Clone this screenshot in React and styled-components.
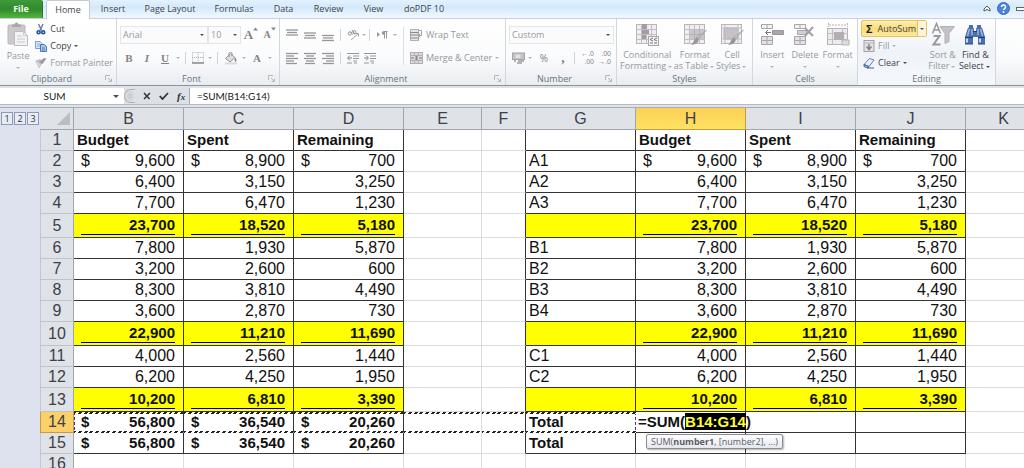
import React from "react";
import styled, { createGlobalStyle, css } from "styled-components";

const tabs = [
  { name: "Insert", width: 46 },
  { name: "Page Layout", width: 68 },
  { name: "Formulas", width: 60 },
  { name: "Data", width: 39 },
  { name: "Review", width: 51 },
  { name: "View", width: 39 },
  { name: "doPDF 10", width: 62 },
];

const columns = [
  { name: "B", width: 110 },
  { name: "C", width: 110 },
  { name: "D", width: 110 },
  { name: "E", width: 78 },
  { name: "F", width: 44 },
  { name: "G", width: 110 },
  { name: "H", width: 110 },
  { name: "I", width: 110 },
  { name: "J", width: 110 },
  { name: "K" },
];

const rows = [
  { label: "", values: ["Budget", "Spent", "Remaining"], type: "head" },
  { label: "A1", values: ["9,600", "8,900", "700"], money: true },
  { label: "A2", values: ["6,400", "3,150", "3,250"] },
  { label: "A3", values: ["7,700", "6,470", "1,230"] },
  { label: "", values: ["23,700", "18,520", "5,180"], type: "subtotal" },
  { label: "B1", values: ["7,800", "1,930", "5,870"] },
  { label: "B2", values: ["3,200", "2,600", "600"] },
  { label: "B3", values: ["8,300", "3,810", "4,490"] },
  { label: "B4", values: ["3,600", "2,870", "730"] },
  { label: "", values: ["22,900", "11,210", "11,690"], type: "subtotal" },
  { label: "C1", values: ["4,000", "2,560", "1,440"] },
  { label: "C2", values: ["6,200", "4,250", "1,950"] },
  { label: "", values: ["10,200", "6,810", "3,390"], type: "subtotal" },
  { label: "Total", values: ["56,800", "36,540", "20,260"], type: "total", money: true },
  { label: "Total", values: ["56,800", "36,540", "20,260"], type: "total", money: true },
];

const ACTIVE_ROW = 14;

// ---------- icons ----------

const PasteIcon = () => (
  <svg width="24" height="25" viewBox="0 0 24 25">
    <rect x="2" y="3" width="17" height="19" rx="1" fill="#cbc7cb" stroke="#bbb7bb" />
    <path d="M6 5V2.500h2.500a2 2 0 0 1 4 0H15V5z" fill="#aaa6aa" />
    <path d="M8.500 9.500h9l4 4v10h-13z" fill="#f3f2f4" stroke="#bdbac0" />
    <path d="M17.500 9.500v4h4M11 14h5M11 17h8M11 20h8" fill="none" stroke="#ccc9cf" />
  </svg>
);

const CutIcon = () => (
  <svg width="12" height="12" viewBox="0 0 12 12">
    <path d="M3.500 1l3 6.500M8 1L5 7.500" fill="none" stroke="#5a7db5" strokeWidth="1.400" />
    <circle cx="3.600" cy="9.200" r="1.500" fill="none" stroke="#1f4f9f" strokeWidth="1.600" />
    <circle cx="8.200" cy="9.200" r="1.500" fill="none" stroke="#1f4f9f" strokeWidth="1.600" />
  </svg>
);

const CopyIcon = () => (
  <svg width="12" height="12" viewBox="0 0 12 12">
    <path d="M.5 1.500h4.500l2 2v5H.5z" fill="#dce8f8" stroke="#7d9cc9" />
    <path d="M2 4h3M2 6h3" stroke="#8aa8d4" />
    <path d="M5.500 4.500H9l2.500 2v5h-6z" fill="#a9c4ec" stroke="#4f76b8" />
    <path d="M7 8h3M7 10h3" stroke="#5f84c0" />
  </svg>
);

const PainterIcon = () => (
  <svg width="12" height="12" viewBox="0 0 12 12">
    <path d="M0 4l5-2 3 3-4 6.500C3 8.500 1.500 6 0 4z" fill="#c0bec2" />
    <path d="M4 5l5-4 2.500.5L7.500 7z" fill="#9c9a9f" />
    <path d="M2 5l3 4" stroke="#eee" />
  </svg>
);

const FontSizeIcon = ({ up }) => (
  <svg width="5" height="4" viewBox="0 0 5 4">
    <path d={up ? "M0 3.500L2.500.5 5 3.500z" : "M0 .5h5L2.500 3.500z"} fill="#888" />
  </svg>
);

const BordersIcon = () => (
  <svg width="12" height="12" viewBox="0 0 12 12">
    <path d="M.5.5h11v10H.5zM6 0v11M0 5.500h12" fill="none" stroke="#b3b0b5" strokeDasharray="1 1" />
    <path d="M0 11h12" stroke="#8d8a90" strokeWidth="1.500" />
  </svg>
);

const BucketIcon = () => (
  <svg width="14" height="13" viewBox="0 0 14 13">
    <path d="M1.500 6.500l5-5 4.500 4-5 4.500z" fill="#dddbe0" stroke="#98959b" />
    <path d="M5 5V1.500a1.500 1.500 0 0 1 3 0V4" fill="none" stroke="#98959b" />
    <path d="M11 5.500c1.500 1.500 2 3 1 4s-2-1-1-4z" fill="#858288" />
    <path d="M1 11.500h12" stroke="#dcdade" strokeWidth="2" />
  </svg>
);

const lineSets = {
  top: ["M0 1h12", "M1 3.500h10", "M0 6h12"],
  middle: ["M0 4h12", "M1 6.500h10", "M0 9h12"],
  bottom: ["M0 6.500h12", "M1 9h10", "M0 11.500h12"],
  left: ["M0 1.500h12", "M0 4h8", "M0 6.500h12", "M0 9h8", "M0 11.500h11"],
  center: ["M0 1.500h12", "M2 4h8", "M0 6.500h12", "M2 9h8", "M1 11.500h10"],
  right: ["M0 1.500h12", "M4 4h8", "M0 6.500h12", "M4 9h8", "M1 11.500h11"],
};

const LinesIcon = ({ kind }) => (
  <svg width="12" height="13" viewBox="0 0 12 13">
    {lineSets[kind].map((d) => (
      <path key={d} d={d} stroke="#98959a" strokeWidth="1.300" />
    ))}
  </svg>
);

const OrientationIcon = () => (
  <svg width="13" height="12" viewBox="0 0 13 12">
    <circle cx="2.800" cy="4.500" r="1.600" fill="none" stroke="#918e94" />
    <path d="M3.500 2.500l2 3M5 1l3 4.500" fill="none" stroke="#918e94" />
    <circle cx="7.500" cy="3.200" r="1.500" fill="none" stroke="#918e94" />
    <path d="M4 11l7.500-6.500M8.500 4.500h3v3" fill="none" stroke="#a8a5ab" />
  </svg>
);

const DirectionIcon = () => (
  <svg width="11" height="10" viewBox="0 0 11 10">
    <path d="M0 2l3 2.500L0 7z" fill="#98959a" />
    <path d="M10.500 1.500H6.500M7.500 1.500v7M9.500 1.500v7" fill="none" stroke="#98959a" />
    <circle cx="6.500" cy="3" r="1.800" fill="#98959a" />
  </svg>
);

const IndentIcon = ({ out }) => (
  <svg width="13" height="12" viewBox="0 0 13 12">
    <path d="M0 1.500h12M6 4h6M6 6.500h6M6 9h4M0 11h5M7 11h3" stroke="#98959a" strokeWidth="1.200" />
    <path d={out ? "M5 6H1M3 3.500L.5 6 3 8.500" : "M0 6h4M2 3.500L4.500 6 2 8.500"} fill="none" stroke="#848187" />
  </svg>
);

const WrapIcon = () => (
  <svg width="13" height="12" viewBox="0 0 13 12">
    <rect x=".5" y=".5" width="8" height="11" fill="#e6e4e8" stroke="#b3b0b5" />
    <path d="M0 3.500h9M0 6h9M0 9h9" stroke="#8b888e" strokeWidth="1.200" />
    <path d="M9 1.500h2.500v5H9M10.500 4.500l-2 2 2 2" fill="none" stroke="#a5a2a8" />
  </svg>
);

const MergeIcon = () => (
  <svg width="13" height="12" viewBox="0 0 13 12">
    <rect x=".5" y=".5" width="12" height="11" fill="#dcdade" stroke="#b1aeb4" />
    <path d="M0 3.500h13M0 8.500h13M4.500 0v3.500M8.500 0v3.500M4.500 8.500V12M8.500 8.500V12" stroke="#b1aeb4" />
    <path d="M1 6h3M12 6H9" stroke="#7f7c82" />
    <path d="M6.500 4v4" stroke="#88858b" strokeWidth="2" />
  </svg>
);

const MoneyIcon = () => (
  <svg width="13" height="13" viewBox="0 0 13 13">
    <rect x=".5" y="1" width="12" height="6.500" fill="#c3c0c6" stroke="#a6a3aa" />
    <rect x="3.500" y="2.500" width="5" height="3.500" fill="#e3e1e5" />
    <path d="M6 9h6M5 11h5M2 9h2" stroke="#9d9aa0" strokeWidth="1.500" />
  </svg>
);

const GridIcon = ({ kind }) => (
  <svg width="24" height="24" viewBox="0 0 24 24">
    <rect x="1.500" y="2.500" width="20" height="19" fill="#f0eef1" stroke="#b9b5ba" />
    {kind === "cell" ? (
      <path d="M4 6h14v11H4z" fill="#c6c3c8" stroke="#b1adb3" />
    ) : (
      <path d="M6.500 2v20M11.500 2v20M16.500 2v20M1 7.500h21M1 12.500h21M1 17.500h21" stroke="#c2bec4" />
    )}
    {kind === "conditional" && (
      <>
        <path d="M7 2h5v5H7zM7 8h7v4H7zM7 13h4v4H7z" fill="#a19da3" />
        <rect x="13.500" y="14.500" width="10" height="9" fill="#f4f3f5" stroke="#a9a5ab" />
        <path d="M18 16l-3 1.500L18 19M15 21h3M22 16l-3 1.500L22 19M19 21h3" fill="none" stroke="#77747a" />
      </>
    )}
    {kind === "table" && <path d="M7 8h14v9H7z" fill="#aaa6ac" fillOpacity=".55" />}
    {kind === "cell" && <path d="M1 6h20M1 17h20M5 2v19M18 2v19" stroke="#c2bec4" />}
    {kind !== "conditional" && (
      <>
        <path d="M23.500 8l-8 9-2-1.500z" fill="#c4c1c6" stroke="#9c989e" strokeWidth=".6" />
        <path d="M15.500 17c1 3-2.500 5.500-7.500 6 3-2 2-5 5.500-7.500z" fill="#99959b" />
      </>
    )}
  </svg>
);

const CellsIcon = ({ kind }) => (
  <svg width="24" height="24" viewBox="0 0 24 24">
    {kind === "format" ? (
      <>
        <path d="M2.500 1v4M21.500 1v4M3 3h18" fill="none" stroke="#b4b0b6" strokeDasharray="2 1" />
        <rect x="1.500" y="6.500" width="20" height="16" fill="#ececee" stroke="#b6b2b8" />
        <path d="M6.500 6v17M16.500 6v17M1 11.500h21M1 17.500h21" stroke="#c2bec4" />
        <path d="M8 10h10v8H8z" fill="#b2aeb4" />
        <path d="M16 18h7v5h-7z" fill="#dddbdf" stroke="#b6b2b8" />
      </>
    ) : (
      <>
        <path d="M1.500 2.500h11v4h-11zM7 2.500v4" fill="#f3f2f4" stroke="#aaa6ac" />
        <path d="M1.500 14.500h11v8h-11zM7 14.500v8M1.500 18.500h11" fill="#e3e1e5" stroke="#aaa6ac" />
        {kind === "insert" ? (
          <>
            <path d="M12.500 8.500h11v4h-11z" fill="#aaa6ac" stroke="#99959b" />
            <path d="M11 10.500H6M8 8l-2.500 2.500L8 13" fill="none" stroke="#77747a" />
          </>
        ) : (
          <>
            <path d="M4.500 8.500h9v4h-9z" fill="#d1ced4" stroke="#aaa6ac" />
            <path d="M12 6l8 8M20 5l-8 9" stroke="#a39fa5" strokeWidth="2" />
          </>
        )}
      </>
    )}
  </svg>
);

const FillIcon = () => (
  <svg width="12" height="12" viewBox="0 0 12 12">
    <rect x="1" y=".5" width="10" height="11" fill="#e4e2e6" stroke="#a4a1a7" />
    <path d="M1 3h10" stroke="#b9b6bc" />
    <path d="M6 4v5M3.500 6.500L6 9.500l2.500-3" fill="none" stroke="#848187" strokeWidth="1.500" />
  </svg>
);

const EraserIcon = () => (
  <svg width="12" height="12" viewBox="0 0 12 12">
    <path d="M1 7.500L6.500 1.500 11 3 6 9.500z" fill="#eaf0fb" stroke="#6481b4" />
    <path d="M1 7.500l5 2-1 1.500-4-1.500z" fill="#aebfe0" stroke="#3e5f9c" />
    <path d="M4 11h7" stroke="#3e5f9c" />
  </svg>
);

const FilterIcon = () => (
  <svg width="24" height="24" viewBox="0 0 24 24">
    <path d="M9 4.500h14.500l-5.500 7v8l-4 2v-10z" fill="#c4c1c7" stroke="#b4b1b7" />
    <path d="M1.500 11.500l4-10 4 10M3 8h5" fill="none" stroke="#9a979d" strokeWidth="1.500" />
    <path d="M2.500 14h6l-6 8.500h7" fill="none" stroke="#9a979d" strokeWidth="2" />
  </svg>
);

const BinocularsIcon = () => (
  <svg width="24" height="24" viewBox="0 0 24 24">
    <path d="M4.500 7l1.500-2V3h4v2l1 2v2h2V7l1-2V3h4v2l1.500 2 2.500 8v7h-7v-7h-5v7h-8v-7z" fill="#4a6fae" />
    <path d="M6.500 7l-2 7M17.500 7l2 7M9 7v6M15 7v6" stroke="#9db7e2" strokeWidth="1.500" />
    <path d="M2 15.500h8M15 15.500h7M10 9.500h4" stroke="#20396b" />
    <path d="M4 16.500v4M17 16.500v4" stroke="#c4d6f1" strokeWidth="2" />
    <path d="M2 22h8M15 22h7" stroke="#2b4880" />
  </svg>
);

const LauncherIcon = () => (
  <svg width="7" height="7" viewBox="0 0 7 7">
    <path d="M.5 5V.5H5M3 3l3 3M6.500 3.500v3h-3" fill="none" stroke="#b4b8be" />
  </svg>
);

const CollapseIcon = () => (
  <svg width="8" height="7" viewBox="0 0 8 7">
    <path d="M1 4l3-3 3 3v2L4 4.500 1 6z" fill="#fff" stroke="#555" />
  </svg>
);

const HelpIcon = () => (
  <svg width="13" height="13" viewBox="0 0 13 13">
    <circle cx="6.500" cy="6.500" r="6" fill="#4a84d6" stroke="#3a6cb8" />
    <path d="M4.500 5a2 2 0 1 1 2.800 1.800c-.6.300-.8.600-.8 1.200" fill="none" stroke="#fff" strokeWidth="1.500" />
    <circle cx="6.500" cy="10" r=".9" fill="#fff" />
  </svg>
);

const CrossIcon = () => (
  <svg width="8" height="8" viewBox="0 0 8 8">
    <path d="M1 1l5.500 6M7 1L1 7" stroke="#333" strokeWidth="1.500" />
  </svg>
);

const CheckIcon = () => (
  <svg width="10" height="8" viewBox="0 0 10 8">
    <path d="M.8 4L3.500 7 9 1" fill="none" stroke="#333" strokeWidth="1.800" />
  </svg>
);

// ---------- pieces ----------

function RibbonGroup({ title, width, launcher, tint, children }) {
  return (
    <Group $width={width} $tint={tint}>
      <GroupBody>{children}</GroupBody>
      <GroupTitle>
        <span>{title}</span>
        {launcher && (
          <Launcher aria-label={`${title} settings`}>
            <LauncherIcon />
          </Launcher>
        )}
      </GroupTitle>
    </Group>
  );
}

function BigCommand({ icon, lines, width, active, arrowBelow }) {
  return (
    <BigButton $width={width} $active={active}>
      {icon}
      {lines.map((line, i) => (
        <span key={line}>
          {line}
          {!arrowBelow && i === lines.length - 1 && <Caret $gap={2} $dark={active} />}
        </span>
      ))}
      {arrowBelow && (
        <span>
          <Caret />
        </span>
      )}
    </BigButton>
  );
}

function ValueCell({ row, value, march }) {
  if (row.type === "head") {
    return (
      <Cell $bordered $bold>
        <CellText>{value}</CellText>
      </Cell>
    );
  }
  const bold = row.type === "subtotal" || row.type === "total";
  return (
    <Cell $bordered $bold={bold} $yellow={row.type === "subtotal"} $march={march}>
      <Amount $underlined={row.type === "subtotal"}>
        <span>{row.money ? "$" : ""}</span>
        <span>{value}</span>
      </Amount>
    </Cell>
  );
}

function SheetRow({ row, number }) {
  const active = number === ACTIVE_ROW;
  const yellow = row.type === "subtotal";
  return (
    <Row $tall={yellow}>
      <RowHead scope="row" $active={active}>
        {number}
      </RowHead>
      {row.values.map((v, i) => (
        <ValueCell key={i} row={row} value={v} march={active && (i === 0 ? "start" : "middle")} />
      ))}
      <Cell $march={active && "middle"} />
      <Cell $march={active && "middle"} $edge />
      <Cell $bordered $yellow={yellow} $bold={row.type === "total"} $march={active && "end"}>
        <CellText>{row.label}</CellText>
      </Cell>
      {number < ACTIVE_ROW &&
        row.values.map((v, i) => <ValueCell key={i} row={row} value={v} />)}
      {active && (
        <Cell $bordered $bold>
          <CellEditor>
            =SUM(<mark>B14:G14</mark>)
            <Hint role="tooltip">
              SUM(<b>number1</b>, [number2], ...)
            </Hint>
          </CellEditor>
        </Cell>
      )}
      {number > ACTIVE_ROW && <Cell $bordered />}
      {number >= ACTIVE_ROW && (
        <>
          <Cell $bordered />
          <Cell $bordered />
        </>
      )}
      <Cell />
    </Row>
  );
}

export default function App() {
  return (
    <Window>
      <GlobalStyle />
      <TabBar>
        <FileTab>File</FileTab>
        <HomeTab>Home</HomeTab>
        {tabs.map((tab) => (
          <Tab key={tab.name} $width={tab.width}>
            {tab.name}
          </Tab>
        ))}
        <WindowTools>
          <PlainButton aria-label="Collapse ribbon">
            <CollapseIcon />
          </PlainButton>
          <PlainButton aria-label="Help">
            <HelpIcon />
          </PlainButton>
          <Minimize aria-label="Minimize" />
        </WindowTools>
      </TabBar>

      <Ribbon>
        <RibbonGroup title="Clipboard" width={117} launcher>
          <BigCommand icon={<PasteIcon />} lines={["Paste"]} width={34} arrowBelow />
          <CommandList>
            <Command $inset $active>
              <CutIcon /> Cut
            </Command>
            <Command $inset $active>
              <CopyIcon /> Copy <Caret $dark />
            </Command>
            <Command $inset>
              <PainterIcon /> Format Painter
            </Command>
          </CommandList>
        </RibbonGroup>

        <RibbonGroup title="Font" width={163} launcher>
          <ToolRows>
            <ToolRow>
              <Picker $width={88}>
                <select aria-label="Font name" defaultValue="Arial">
                  <option>Arial</option>
                </select>
                <Caret $dark />
              </Picker>
              <Picker $width={33}>
                <select aria-label="Font size" defaultValue="10">
                  <option>10</option>
                </select>
                <Caret $dark />
              </Picker>
              <LetterButton $width={20} $size={13}>
                A<FontSizeIcon up />
              </LetterButton>
              <LetterButton $width={17} $size={10}>
                A<FontSizeIcon />
              </LetterButton>
            </ToolRow>
            <ToolRow>
              <LetterButton $width={18} $size={11}>B</LetterButton>
              <LetterButton $width={18} $size={11} $italic>I</LetterButton>
              <LetterButton $width={18} $size={11} $underline>U</LetterButton>
              <Caret $gap={2} />
              <Divider />
              <ToolButton $width={16} aria-label="Borders">
                <BordersIcon />
              </ToolButton>
              <Caret $gap={2} />
              <Divider />
              <ToolButton $width={18} aria-label="Fill color">
                <BucketIcon />
              </ToolButton>
              <Caret $gap={2} />
              <LetterButton $width={18} $size={11}>A</LetterButton>
              <Caret $gap={2} />
            </ToolRow>
          </ToolRows>
        </RibbonGroup>

        <RibbonGroup title="Alignment" width={226} launcher>
          <ToolRows>
            <ToolRow>
              {["top", "middle", "bottom"].map((kind) => (
                <ToolButton key={kind} $width={18} aria-label={`Align ${kind}`}>
                  <LinesIcon kind={kind} />
                </ToolButton>
              ))}
              <Divider />
              <ToolButton $width={17} aria-label="Orientation">
                <OrientationIcon />
              </ToolButton>
              <Caret />
              <Divider />
              <ToolButton $width={17} aria-label="Text direction">
                <DirectionIcon />
              </ToolButton>
              <Caret $gap={2} />
            </ToolRow>
            <ToolRow>
              {["left", "center", "right"].map((kind) => (
                <ToolButton key={kind} $width={18} aria-label={`Align ${kind}`}>
                  <LinesIcon kind={kind} />
                </ToolButton>
              ))}
              <Divider />
              <ToolButton $width={17} aria-label="Decrease indent">
                <IndentIcon out />
              </ToolButton>
              <ToolButton $width={17} aria-label="Increase indent">
                <IndentIcon />
              </ToolButton>
            </ToolRow>
          </ToolRows>
          <TallDivider />
          <ToolRows>
            <ToolRow>
              <Command>
                <WrapIcon /> Wrap Text
              </Command>
            </ToolRow>
            <ToolRow>
              <Command>
                <MergeIcon /> Merge &amp; Center <Caret />
              </Command>
            </ToolRow>
          </ToolRows>
        </RibbonGroup>

        <RibbonGroup title="Number" width={111} launcher>
          <ToolRows>
            <ToolRow>
              <Picker $width={105}>
                <select aria-label="Number format" defaultValue="Custom">
                  <option>Custom</option>
                </select>
                <Caret $dark />
              </Picker>
            </ToolRow>
            <ToolRow>
              <ToolButton $width={18} aria-label="Accounting format">
                <MoneyIcon />
              </ToolButton>
              <Caret $gap={1} />
              <ToolButton $width={22}>%</ToolButton>
              <LetterButton $width={16} $size={14}>,</LetterButton>
              <Divider />
              <DecimalButton aria-label="Increase decimal">
                <span>←.0</span>
                <span>.00</span>
              </DecimalButton>
              <DecimalButton aria-label="Decrease decimal">
                <span>.00</span>
                <span>→.0</span>
              </DecimalButton>
            </ToolRow>
          </ToolRows>
        </RibbonGroup>

        <RibbonGroup title="Styles" width={136}>
          <BigCommand icon={<GridIcon kind="conditional" />} lines={["Conditional", "Formatting"]} width={55} />
          <BigCommand icon={<GridIcon kind="table" />} lines={["Format", "as Table"]} width={41} />
          <BigCommand icon={<GridIcon kind="cell" />} lines={["Cell", "Styles"]} width={34} />
        </RibbonGroup>

        <RibbonGroup title="Cells" width={105}>
          <BigCommand icon={<CellsIcon kind="insert" />} lines={["Insert"]} width={33} arrowBelow />
          <BigCommand icon={<CellsIcon kind="delete" />} lines={["Delete"]} width={33} arrowBelow />
          <BigCommand icon={<CellsIcon kind="format" />} lines={["Format"]} width={33} arrowBelow />
        </RibbonGroup>

        <RibbonGroup title="Editing" width={138} tint>
          <CommandList>
            <AutoSum>
              <b>Σ</b> AutoSum
              <i>
                <Caret $dark />
              </i>
            </AutoSum>
            <Command $inset>
              <FillIcon /> Fill <Caret />
            </Command>
            <Command $inset $active>
              <EraserIcon /> Clear <Caret $dark />
            </Command>
          </CommandList>
          <BigCommand icon={<FilterIcon />} lines={["Sort &", "Filter"]} width={32} />
          <BigCommand icon={<BinocularsIcon />} lines={["Find &", "Select"]} width={34} active />
        </RibbonGroup>
      </Ribbon>

      <FormulaBar>
        <NameBox>
          <input aria-label="Name box" defaultValue="SUM" />
          <PlainButton aria-label="Names">
            <Caret $dark $large />
          </PlainButton>
        </NameBox>
        <FormulaTools>
          <Knob />
          <PlainButton aria-label="Cancel">
            <CrossIcon />
          </PlainButton>
          <PlainButton aria-label="Enter">
            <CheckIcon />
          </PlainButton>
          <FxButton>
            f<small>x</small>
          </FxButton>
        </FormulaTools>
        <FormulaInput aria-label="Formula" defaultValue="=SUM(B14:G14)" />
      </FormulaBar>

      <SheetArea>
        <Outline>
          {[1, 2, 3].map((n) => (
            <button key={n}>{n}</button>
          ))}
        </Outline>
        <SheetScroll>
          <Sheet>
            <colgroup>
              <col style={{ width: 34 }} />
              {columns.map((c) => (
                <col key={c.name} style={{ width: c.width }} />
              ))}
            </colgroup>
            <thead>
              <tr>
                <Corner aria-label="Select all">
                  <svg width="13" height="13" viewBox="0 0 13 13">
                    <path d="M13 0v13H0z" fill="#b9bdc4" />
                  </svg>
                </Corner>
                {columns.map((c) => (
                  <ColHead key={c.name} scope="col" $active={c.name === "H"}>
                    {c.name}
                  </ColHead>
                ))}
              </tr>
            </thead>
            <tbody>
              {rows.map((row, i) => (
                <SheetRow key={i} row={row} number={i + 1} />
              ))}
              <Row>
                <RowHead scope="row">16</RowHead>
                {columns.map((c) => (
                  <Cell key={c.name} />
                ))}
              </Row>
            </tbody>
          </Sheet>
        </SheetScroll>
      </SheetArea>
    </Window>
  );
}

// ---------- styles ----------

const GlobalStyle = createGlobalStyle`
  * {
    box-sizing: border-box;
  }
  body {
    margin: 0;
    background: #fff;
  }
  button, input, select {
    margin: 0;
    padding: 0;
    border: 0;
    background: none;
    font: inherit;
    color: inherit;
  }
  svg {
    display: block;
    flex: none;
  }
`;

const uiFont = `"Open Sans", "Noto Sans", sans-serif`;

const Window = styled.div`
  display: flex;
  flex-direction: column;
  height: 100vh;
  overflow: hidden;
  font-family: ${uiFont};
  font-size: 9px;
  line-height: 10px;
  color: #3f434a;
`;

const TabBar = styled.nav`
  display: flex;
  flex: none;
  height: 19px;
  background: linear-gradient(#e4f2fd, #d3e9fb 40%, #f1f8fe);
  border-bottom: 1px solid #cbd0d6;
`;

const FileTab = styled.button`
  width: 43px;
  height: 18px;
  margin-right: 3px;
  color: #f2ffe8;
  font-weight: bold;
  background: linear-gradient(#3f9a3a, #2e8a2d 50%, #57b33e);
  border-right: 1px solid #2a7a2b;
  border-radius: 0 2px 0 0;
`;

const Tab = styled.button`
  width: ${(p) => p.$width}px;
  height: 18px;
`;

const HomeTab = styled.button`
  width: 44px;
  height: 19px;
  background: #fff;
  border: 1px solid #c3cad2;
  border-bottom: 0;
  border-radius: 2px 2px 0 0;
`;

const WindowTools = styled.div`
  display: flex;
  align-items: center;
  gap: 6px;
  height: 17px;
  margin-left: auto;
`;

const PlainButton = styled.button`
  display: flex;
  align-items: center;
  justify-content: center;
`;

const Minimize = styled.button`
  width: 8px;
  height: 4px;
  border: 1px solid #666;
  border-right: 0;
  background: #fff;
`;

const Ribbon = styled.div`
  display: flex;
  flex: none;
  height: 67px;
  background: linear-gradient(#fff, #fafbfc 60%, #e9edf1);
  border-bottom: 1px solid #8d9299;
`;

const Group = styled.section`
  display: flex;
  flex-direction: column;
  flex: none;
  width: ${(p) => p.$width}px;
  border-right: 1px solid #d3d7dc;
  background: ${(p) =>
    p.$tint ? "linear-gradient(#fdfefe, #eff3f8 50%, #f5f8fb)" : "none"};
`;

const GroupBody = styled.div`
  display: flex;
  flex: 1;
  padding: 1px 3px 0;
`;

const GroupTitle = styled.div`
  display: flex;
  align-items: center;
  height: 13px;
  padding: 0 4px;
  color: #6b727c;

  span {
    flex: 1;
    text-align: center;
  }
`;

const Launcher = styled.button`
  width: 13px;
  height: 7px;
  padding-left: 6px;
`;

const Caret = styled.span`
  display: inline-block;
  flex: none;
  width: 0;
  height: 0;
  margin: 0 ${(p) => p.$gap || 0}px;
  vertical-align: middle;
  border: ${(p) => (p.$large ? 3 : 2)}px solid transparent;
  border-bottom: 0;
  border-top-color: ${(p) => (p.$dark ? "#4a4d52" : "#b0b2b6")};
`;

const BigButton = styled.button`
  display: flex;
  flex-direction: column;
  align-items: center;
  width: ${(p) => p.$width}px;
  padding-top: 2px;
  line-height: 11px;
  white-space: nowrap;
  color: ${(p) => (p.$active ? "#3f434a" : "#96989c")};

  svg {
    margin-bottom: 3px;
  }
`;

const CommandList = styled.div`
  display: flex;
  flex-direction: column;
`;

const Command = styled.button`
  display: flex;
  align-items: center;
  gap: 3px;
  height: 17px;
  padding-left: ${(p) => (p.$inset ? 2 : 0)}px;
  white-space: nowrap;
  color: ${(p) => (p.$active ? "#3f434a" : "#96989c")};
`;

const AutoSum = styled.button`
  display: flex;
  align-items: center;
  gap: 5px;
  height: 17px;
  padding-left: 4px;
  white-space: nowrap;
  background: linear-gradient(#fdeeb2, #fadd79 50%, #fbe8a0);
  border: 1px solid #e6c35c;
  border-radius: 2px;

  b {
    font-size: 11px;
    color: #222;
  }

  i {
    display: flex;
    align-items: center;
    align-self: stretch;
    margin-left: -4px;
    padding: 0 2px;
    background: #fdf6da;
    border-left: 1px solid #e6c35c;
  }
`;

const ToolRows = styled.div`
  display: flex;
  flex-direction: column;
  gap: 5px;
  padding-top: 6px;
`;

const ToolRow = styled.div`
  display: flex;
  align-items: center;
  height: 18px;
`;

const ToolButton = styled.button`
  display: flex;
  align-items: center;
  justify-content: center;
  width: ${(p) => p.$width}px;
  height: 16px;
  font-size: 10px;
  color: #858287;
`;

const LetterButton = styled(ToolButton)`
  font-family: "Liberation Serif", serif;
  font-size: ${(p) => p.$size}px;
  font-weight: bold;
  font-style: ${(p) => (p.$italic ? "italic" : "normal")};
  text-decoration: ${(p) => (p.$underline ? "underline" : "none")};

  svg {
    align-self: flex-start;
  }
`;

const DecimalButton = styled(ToolButton)`
  flex-direction: column;
  align-items: flex-end;
  width: 17px;
  padding-right: 2px;
  font-family: "Liberation Sans", sans-serif;
  font-size: 7px;
  line-height: 8px;
`;

const Picker = styled.label`
  display: flex;
  align-items: center;
  width: ${(p) => p.$width}px;
  height: 18px;
  padding-right: 3px;
  background: #fbfbfc;
  border: 1px solid #e3e5e8;
  color: #96989c;

  select {
    flex: 1;
    min-width: 0;
    padding-left: 2px;
    appearance: none;
  }
`;

const Divider = styled.span`
  width: 1px;
  height: 12px;
  margin: 0 4px 0 3px;
  background: #d0d3d8;
`;

const TallDivider = styled.span`
  width: 1px;
  height: 38px;
  margin: 7px 6px 0 4px;
  background: #dcdfe3;
`;

const FormulaBar = styled.div`
  display: flex;
  flex: none;
  height: 22px;
  padding: 2px 0;
  background: #dfe3e8;
  border-bottom: 1px solid #a7adb6;
`;

const NameBox = styled.div`
  display: flex;
  align-items: center;
  width: 124px;
  padding-right: 5px;
  background: #fff;
  font-family: Lato, sans-serif;
  font-size: 10px;
  color: #222;
  border-bottom: 1px solid #b5bac2;

  input {
    width: 113px;
    padding-right: 4px;
    text-align: center;
  }
`;

const FormulaTools = styled.div`
  display: flex;
  align-items: center;
  gap: 8px;
  width: 66px;
  background: #dde1e6;
  border-right: 1px solid #a7adb6;
  border-bottom: 1px solid #b5bac2;
`;

const Knob = styled.span`
  width: 11px;
  height: 14px;
  border: 1px solid #aab0b8;
  border-right: 0;
  border-radius: 7px 0 0 7px;
  background: radial-gradient(#c5cad0, #e7eaee);
`;

const FxButton = styled.button`
  font: italic bold 11px "Liberation Serif", serif;
  color: #333;

  small {
    font-size: 9px;
  }
`;

const FormulaInput = styled.input`
  flex: 1;
  min-width: 0;
  padding-left: 7px;
  background: #fff;
  font-family: Lato, sans-serif;
  font-size: 10px;
  color: #222;
  border-bottom: 1px solid #b5bac2;
`;

const SheetArea = styled.main`
  display: flex;
  flex: 1;
  min-height: 0;
`;

const Outline = styled.aside`
  display: flex;
  flex: none;
  align-items: flex-start;
  gap: 1px;
  width: 40px;
  padding: 4px 0 0 1px;
  background: #dde2ee;

  button {
    width: 12px;
    height: 13px;
    border: 1px solid #8e9bb3;
    background: #e8ecf5;
    font-size: 9px;
    line-height: 10px;
    color: #333;
  }
`;

const SheetScroll = styled.div`
  flex: 1;
  min-width: 0;
  overflow: hidden;
`;

const Sheet = styled.table`
  width: 100%;
  min-width: 1002px;
  table-layout: fixed;
  border-spacing: 0;
  font-family: "Liberation Sans", Arial, sans-serif;
  font-size: 16px;
  line-height: 18px;
  color: #111;
`;

const headCell = css`
  padding: 0;
  font-weight: normal;
  color: #3c4047;
  text-align: center;
  background: #dfe2e7;
  border-right: 1px solid #9fa6b0;
  border-bottom: 1px solid #9fa6b0;
`;

const Corner = styled.th`
  ${headCell}
  height: 22px;

  svg {
    margin: 0 3px 0 auto;
  }
`;

const ColHead = styled.th`
  ${headCell}
  ${(p) => p.$active && "background: linear-gradient(#fcd057, #ffe262); border-color: #c79a3b;"}
`;

const RowHead = styled.th`
  ${headCell}
  border-left: 1px solid #c2c7cf;
  border-bottom-color: #bfc4cc;
  ${(p) => p.$active && "background: #fbd068; border-color: #c79a3b;"}
`;

const Row = styled.tr`
  height: ${(p) => (p.$tall ? 24 : 21)}px;
`;

// marching ants around the range picked for the formula
const antsX = "repeating-linear-gradient(135deg, #222 0 2px, #fff 2px 4px)";
const antsY = "repeating-linear-gradient(#3a35a0 0 3px, #fff 3px 5px)";
const noAnts = "linear-gradient(transparent, transparent)";

const Cell = styled.td`
  padding: 0;
  font-size: ${(p) => (p.$bold ? 15 : 16)}px;
  font-weight: ${(p) => (p.$bold ? "bold" : "normal")};
  background-color: ${(p) => (p.$yellow ? "#ff0" : "#fff")};
  border-right: 1px solid ${(p) => (p.$bordered || p.$edge ? "#333" : "#d9dce3")};
  border-bottom: 1px solid ${(p) => (p.$bordered ? "#333" : "#d9dce3")};
  ${(p) =>
    p.$march &&
    css`
      border-bottom-color: transparent;
      ${p.$march === "end" && "border-right-color: transparent;"}
      background-image: ${antsX}, ${antsX}, ${p.$march === "middle" ? noAnts : antsY};
      background-size: 100% 2px, 100% 2px, 1px 100%;
      background-position: 0 0, 0 100%, ${p.$march === "end" ? "100% 0" : "0 0"};
      background-repeat: no-repeat;
      background-origin: border-box;
    `}
`;

const CellText = styled.div`
  padding-left: 3px;
`;

const Amount = styled.div`
  display: flex;
  justify-content: space-between;
  margin: 0 8px 0 7px;
  ${(p) =>
    p.$underlined &&
    css`
      padding-top: 1px;
      margin-bottom: 2px;
      border-bottom: 1px solid #000;
    `}
`;

const CellEditor = styled.div`
  position: relative;
  z-index: 1;
  width: max-content;
  margin-right: -10px;
  padding-left: 2px;

  mark {
    background: #000;
    color: #ff3;
  }
`;

const Hint = styled.div`
  position: absolute;
  top: 21px;
  left: 10px;
  padding: 1px 4px;
  white-space: nowrap;
  font: 9px/11px ${uiFont};
  color: #5a5d63;
  background: linear-gradient(#fff, #e6e8f0);
  border: 1px solid #8a8c92;
  border-radius: 2px;
  box-shadow: 1px 1px 2px rgba(0, 0, 0, 0.3);
`;
